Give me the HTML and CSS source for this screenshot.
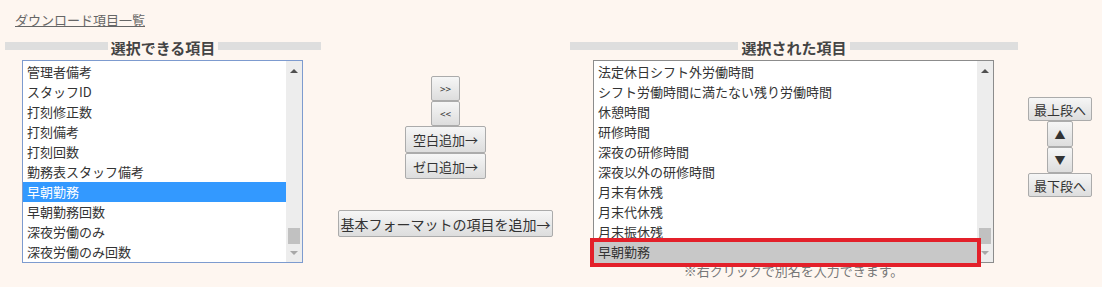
FILE: index.html
```html
<!DOCTYPE html>
<html lang="ja">
<head>
  <meta charset="UTF-8" />
  <title>ダウンロード項目一覧</title>
  <link rel="stylesheet" href="styles.css">
</head>
<body>
  <div class="page">
    <a class="title" href="#">ダウンロード項目一覧</a>

    <div class="cols">
      <!-- available items -->
      <div class="col col-left">
        <div class="head"><span>選択できる項目</span></div>
        <div class="list list-blue">
          <ul class="rows">
            <li>管理者備考</li>
            <li>スタッフID</li>
            <li>打刻修正数</li>
            <li>打刻備考</li>
            <li>打刻回数</li>
            <li>勤務表スタッフ備考</li>
            <li class="sel">早朝勤務</li>
            <li>早朝勤務回数</li>
            <li>深夜労働のみ</li>
            <li>深夜労働のみ回数</li>
          </ul>
          <div class="sbar">
            <span class="arr up"></span>
            <span class="track"></span>
            <span class="thumb"></span>
            <span class="arr down"></span>
          </div>
        </div>
      </div>

      <!-- move buttons -->
      <div class="col col-mid">
        <button class="btn btn-sm">&gt;&gt;</button>
        <button class="btn btn-sm">&lt;&lt;</button>
        <button class="btn btn-add">空白追加→</button>
        <button class="btn btn-add">ゼロ追加→</button>
        <button class="btn btn-wide">基本フォーマットの項目を追加→</button>
      </div>

      <!-- selected items -->
      <div class="col col-right">
        <div class="head"><span>選択された項目</span></div>
        <div class="list list-gray">
          <ul class="rows">
            <li>法定休日シフト外労働時間</li>
            <li>シフト労働時間に満たない残り労働時間</li>
            <li>休憩時間</li>
            <li>研修時間</li>
            <li>深夜の研修時間</li>
            <li>深夜以外の研修時間</li>
            <li>月末有休残</li>
            <li>月末代休残</li>
            <li>月末振休残</li>
            <li class="picked">早朝勤務</li>
          </ul>
          <div class="sbar">
            <span class="arr up"></span>
            <span class="track"></span>
            <span class="thumb"></span>
            <span class="arr down"></span>
          </div>
        </div>
        <p class="note">※右クリックで別名を入力できます。</p>
      </div>

      <!-- order buttons -->
      <div class="col col-side">
        <button class="btn btn-order">最上段へ</button>
        <button class="btn btn-step">▲</button>
        <button class="btn btn-step">▼</button>
        <button class="btn btn-order">最下段へ</button>
      </div>
    </div>
  </div>
</body>
</html>
```

FILE: styles.css
```css
body {
  margin: 0;
  background: #fef6f0;
  color: #333;
  font-family: "Noto Sans CJK JP", "Noto Sans", sans-serif;
  font-size: 13px;
}
.page {
  padding: 10px 0 0 5px;
}
.title {
  display: inline-block;
  margin-left: 10px;
  line-height: 20px;
  color: #666;
  text-decoration: underline;
}
.cols {
  display: flex;
  margin-top: 8px;
}
.col-left {
  width: 316px;
}
.col-mid {
  width: 249px;
  display: flex;
  flex-direction: column;
  align-items: center;
  padding-top: 38px;
}
.col-right {
  width: 448px;
}
.col-side {
  width: 84px;
  display: flex;
  flex-direction: column;
  align-items: center;
  padding-top: 59px;
}
.head {
  height: 20px;
  line-height: 20px;
  text-align: center;
  background: linear-gradient(#dedede, #dedede) no-repeat 0 4px / 100% 8px;
}
.head span {
  padding: 0 3px;
  background: #fef6f0;
  color: #444;
  font-size: 15px;
  font-weight: bold;
}
.list {
  display: flex;
  margin-top: 2px;
  height: 201px;
  background: #fff;
}
.list-blue {
  width: 279px;
  margin-left: 17px;
  border: 1px solid #7d9bcf;
}
.list-gray {
  width: 399px;
  margin-left: 23px;
  border: 1px solid #8c8c8c;
}
.rows {
  flex: 1;
  margin: 0;
  padding: 1px 0 0;
  list-style: none;
}
.rows li {
  height: 20px;
  line-height: 20px;
  padding-left: 4px;
  white-space: nowrap;
}
.rows li.sel {
  background: #3399ff;
  color: #fff;
}
.rows li.picked {
  position: relative;
  z-index: 1;
  height: 21px;
  background: #c8c8c8;
  outline: 4px solid #e3202a;
}
.sbar {
  width: 16px;
  display: flex;
  flex-direction: column;
  align-items: center;
  background: #ededed;
}
.sbar .track {
  flex: 1;
}
.sbar .thumb {
  width: 12px;
  height: 16px;
  background: #c1c1c1;
}
.arr {
  width: 16px;
  display: flex;
  align-items: center;
  justify-content: center;
}
.arr.up {
  height: 20px;
}
.arr.down {
  height: 18px;
}
.arr::before {
  content: "";
  border-left: 4px solid transparent;
  border-right: 4px solid transparent;
}
.arr.up::before {
  border-bottom: 4px solid #505050;
}
.arr.down::before {
  border-top: 4px solid #a8a8a8;
}
.note {
  margin: 0 0 0 23px;
  width: 401px;
  text-align: center;
  line-height: 16px;
  color: #777;
}
.btn {
  box-sizing: border-box;
  margin: 0;
  padding: 0;
  border: 1px solid #ababab;
  border-radius: 2px;
  background: linear-gradient(#f6f6f6, #dddddd);
  color: #333;
  font-family: inherit;
  font-size: 13px;
}
.btn-sm {
  width: 29px;
  height: 25px;
  font-size: 10px;
}
.btn-add {
  width: 81px;
  height: 27px;
}
.btn-add + .btn-add {
  height: 26px;
}
.btn-wide {
  width: 215px;
  height: 27px;
  margin-top: 31px;
  font-size: 14px;
}
.btn-order {
  width: 64px;
  height: 24px;
}
.btn-step {
  width: 26px;
  height: 26px;
  font-size: 11px;
}
```
